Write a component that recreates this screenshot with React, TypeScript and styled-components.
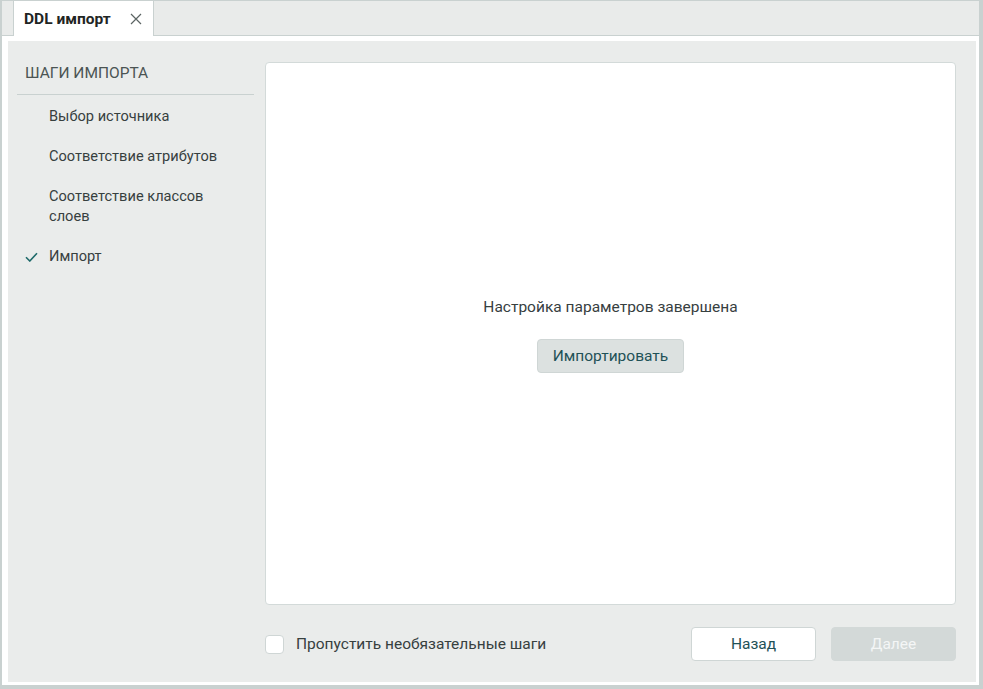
import React from 'react';
import styled, { createGlobalStyle } from 'styled-components';

const GlobalStyle = createGlobalStyle`
  html, body {
    margin: 0;
    padding: 0;
    background: #ffffff;
  }
  * {
    box-sizing: border-box;
  }
  body {
    font-family: Roboto, 'Liberation Sans', sans-serif;
    font-size: 15.5px;
    color: #37403f;
  }
`;

const Window = styled.div`
  width: 983px;
  height: 689px;
  display: flex;
  flex-direction: column;
  border-style: solid;
  border-color: #c9d1d0;
  border-width: 1px 4px 4px 2px;
  background: #ffffff;
`;

const TabBar = styled.div`
  height: 35px;
  flex: none;
  display: flex;
  align-items: stretch;
  padding-left: 11px;
  background: #e9ebea;
  border-bottom: 1px solid #c9d1d0;
`;

const Tab = styled.div`
  width: 141px;
  margin-bottom: -1px;
  display: flex;
  align-items: center;
  justify-content: space-between;
  padding: 0 10px 0 10px;
  background: #ffffff;
  border-left: 1px solid #c9d1d0;
  border-right: 1px solid #c9d1d0;
  font-weight: 700;
  font-size: 15.5px;
  color: #1f2524;
`;

const CloseButton = styled.button`
  border: none;
  background: none;
  padding: 0;
  width: 14px;
  height: 14px;
  display: flex;
  align-items: center;
  justify-content: center;
  cursor: pointer;
`;

const Frame = styled.div`
  flex: 1;
  padding: 5px 3px 3px 6px;
  display: flex;
  min-height: 0;
`;

const Content = styled.div`
  flex: 1;
  display: flex;
  gap: 11px;
  padding: 21px 20px 21px 9px;
  background: #eaeceb;
`;

const Sidebar = styled.nav`
  width: 237px;
  flex: none;
  display: flex;
  flex-direction: column;
`;

const SidebarTitle = styled.div`
  padding: 1px 8px 11px;
  line-height: 20px;
  font-size: 15.5px;
  color: #4b5453;
  border-bottom: 1px solid #c9d1d0;
`;

const StepList = styled.ul`
  list-style: none;
  margin: 1px 0 0;
  padding: 0;
`;

const Step = styled.li`
  position: relative;
  padding: 10px 16px 10px 32px;
  line-height: 20px;
  font-size: 14.6px;
  color: #37403f;
`;

const StepMark = styled.svg`
  position: absolute;
  left: 8px;
  top: 16px;
`;

const Main = styled.div`
  flex: 1;
  display: flex;
  flex-direction: column;
  gap: 22px;
  min-width: 0;
`;

const Panel = styled.div`
  flex: 1;
  background: #ffffff;
  border: 1px solid #d3dad9;
  border-radius: 4px;
  display: flex;
  flex-direction: column;
  align-items: center;
  justify-content: center;
  gap: 22px;
  padding-top: 2px;
`;

const Message = styled.div`
  line-height: 20px;
  color: #37403f;
`;

const Button = styled.button<{ $variant?: 'secondary' | 'muted' | 'disabled' }>`
  height: 34px;
  padding: 0 15px;
  border-radius: 4px;
  font-family: Roboto, 'Liberation Sans', sans-serif;
  font-size: 15.5px;
  cursor: pointer;
  border: 1px solid ${({ $variant }) => ($variant === 'disabled' ? '#d3d9d8' : '#cfd6d5')};
  background: ${({ $variant }) =>
    $variant === 'disabled' ? '#d3d9d8' : $variant === 'muted' ? '#dce1e0' : '#ffffff'};
  color: ${({ $variant }) => ($variant === 'disabled' ? '#f4f6f6' : '#1f5157')};
`;

const FooterButton = styled(Button)`
  width: 125px;
`;

const Footer = styled.div`
  height: 34px;
  flex: none;
  display: flex;
  align-items: center;
  gap: 15px;
`;

const CheckLabel = styled.label`
  display: flex;
  align-items: center;
  gap: 12px;
  line-height: 20px;
  color: #37403f;
  cursor: pointer;
  margin-right: auto;
`;

const CheckBox = styled.span`
  width: 19px;
  height: 19px;
  border: 1px solid #cfd6d5;
  border-radius: 4px;
  background: #ffffff;
`;

const steps = [
  { label: 'Выбор источника' },
  { label: 'Соответствие атрибутов' },
  { label: 'Соответствие классов слоев' },
  { label: 'Импорт', done: true },
];

const App: React.FunctionComponent = () => (
  <>
    <GlobalStyle />
    <Window>
      <TabBar>
        <Tab>
          DDL импорт
          <CloseButton aria-label="close">
            <svg width="12" height="12" viewBox="0 0 12 12">
              <path d="M1 1l10 10M11 1L1 11" stroke="#5b6463" strokeWidth="1.2" fill="none" />
            </svg>
          </CloseButton>
        </Tab>
      </TabBar>
      <Frame>
        <Content>
          <Sidebar>
            <SidebarTitle>ШАГИ ИМПОРТА</SidebarTitle>
            <StepList>
              {steps.map((step) => (
                <Step key={step.label}>
                  {step.done && (
                    <StepMark width="13" height="10" viewBox="0 0 13 10">
                      <path d="M1 5.2l3.8 3.8L12 1.2" stroke="#1f6a6a" strokeWidth="1.6" fill="none" />
                    </StepMark>
                  )}
                  {step.label}
                </Step>
              ))}
            </StepList>
          </Sidebar>
          <Main>
            <Panel>
              <Message>Настройка параметров завершена</Message>
              <Button $variant="muted">Импортировать</Button>
            </Panel>
            <Footer>
              <CheckLabel>
                <CheckBox />
                Пропустить необязательные шаги
              </CheckLabel>
              <FooterButton $variant="secondary">Назад</FooterButton>
              <FooterButton $variant="disabled">Далее</FooterButton>
            </Footer>
          </Main>
        </Content>
      </Frame>
    </Window>
  </>
);

export default App;
